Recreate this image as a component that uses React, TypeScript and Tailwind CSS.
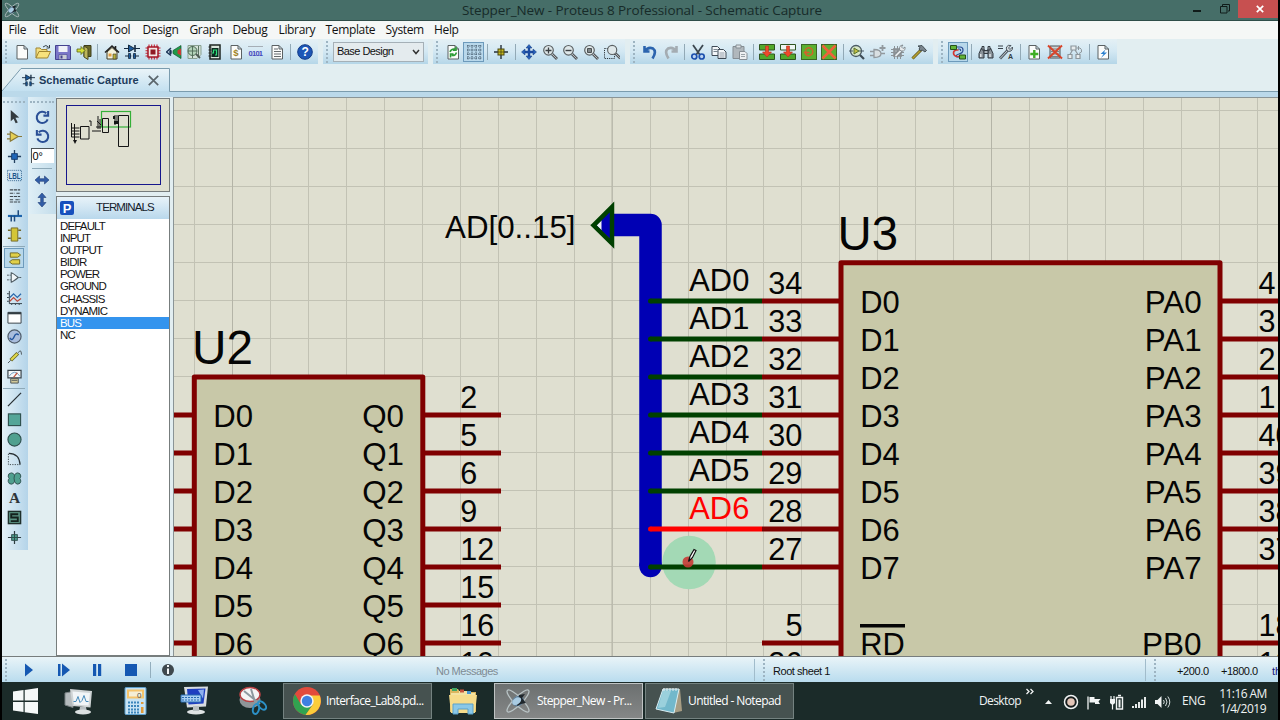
import type { ReactNode } from 'react';
import clsx from 'clsx';

type IconMap = Record<string, ReactNode>;

const page = <path d="M3 1.5h7l3.5 3.5v10H3z M10 1.5V5h3.5" fill="#fbfcfb" stroke="#5b6163" />;

const lens = (
  <>
    <path d="M10 10l5 5" stroke="#55595c" strokeWidth="2.8" />
    <path d="M10 10l4.6 4.6" stroke="#b5babd" strokeWidth="1" />
    <circle cx="6.5" cy="6.3" r="4.8" fill="#dfe8ea" stroke="#5b6062" strokeWidth="1.2" />
  </>
);

const blockArrow = <path d="M6.500 2h3v6h3L8 13 3.500 8h3z" fill="#ee4a2c" stroke="#b5301c" strokeWidth=".6" />;

const icons: IconMap = {
  new: page,
  open: (
    <>
      <path d="M1 14V4h4l1.500 1.500H12V8" fill="#f3df80" stroke="#a08530" />
      <path d="M1 14L4 7.500h11.500L12.500 14z" fill="#f8e27c" stroke="#a08530" />
      <path d="M8 3q3-3 5.500 0M14.500 1v3h-3" fill="none" stroke="#37424c" />
    </>
  ),
  save: (
    <>
      <path d="M.5 1.500h14l1 1v13H.5z" fill="#7a76c8" stroke="#45438f" />
      <path d="M3.500 2h9v6h-9z" fill="#f0f2f8" />
      <path d="M4 10.500h8v5H4z" fill="#c9cdd6" stroke="#45438f" strokeWidth=".6" />
      <path d="M5.500 11.500h2v3h-2z" fill="#45438f" />
    </>
  ),
  exit: (
    <>
      <path d="M8 1.500h7v11H8z" fill="#6b6a28" stroke="#3c3c1c" />
      <path d="M8 2l4 2.500v11L8 13z" fill="#bdb65a" stroke="#4a4a20" />
      <path d="M1 5h4V2.500L9 6.500 5 10.500V8H1z" fill="#d4e03a" stroke="#596418" strokeWidth=".8" />
    </>
  ),
  home: (
    <>
      <path d="M3 8v7h10V8L8 3.500z" fill="#f5f3dc" stroke="#403a22" />
      <path d="M1 8.500L8 2l7 6.500M11.500 2v3" fill="none" stroke="#222" strokeWidth="1.600" />
      <path d="M9 10h3v5H9z" fill="#b8b13a" stroke="#403a22" strokeWidth=".6" />
      <path d="M4.500 9.500h3v3h-3z" fill="#df9b42" />
    </>
  ),
  schematic: (
    <>
      <path d="M0 4.500h16M1 12h14" stroke="#14293f" strokeWidth="1.100" />
      <path d="M4.500 1v7l6-3.500z" fill="#1b5b9d" stroke="#14293f" />
      <path d="M11 1v7" stroke="#14293f" strokeWidth="1.600" />
      <path d="M4.500 9.500h2v5h-2zM9.500 9.500h2v5h-2z" fill="#1b5b9d" stroke="#14293f" strokeWidth=".8" />
      <path d="M7.200 12h1.800" stroke="#d6e9f3" strokeWidth="1.500" />
    </>
  ),
  chip: (
    <>
      <path d="M4 .5v15M6.700 .5v15M9.300 .5v15M12 .5v15M.5 4h15M.5 6.700h15M.5 9.300h15M.5 12h15" stroke="#c3202e" strokeWidth="1.100" />
      <rect x="3" y="3" width="10" height="10" fill="#f3e9e6" stroke="#a51426" strokeWidth="1.500" />
      <rect x="5.500" y="5.500" width="5" height="5" fill="#8f1a24" />
    </>
  ),
  view3d: (
    <>
      <path d="M15 1.500v13L7 9.500v-3z" fill="#1f9a4a" stroke="#12542b" strokeWidth=".7" />
      <path d="M11.500 6.500l3.500-2v7l-3.500-2z" fill="#c83c34" />
      <path d="M5 4L.5 8 5 11.500" fill="none" stroke="#1c3557" strokeWidth="1.500" />
      <ellipse cx="4.500" cy="8" rx="1.300" ry="2.500" fill="#1c3557" />
    </>
  ),
  gerber: (
    <>
      <path d="M2 1.500h13v9l-4 4H2z" fill="#d4e2d8" stroke="#8aa192" />
      <circle cx="6.500" cy="7" r="4.500" fill="#b4d4ba" stroke="#4c6853" />
      <path d="M2 7h9M6.500 2v12M12.500 2v10" stroke="#4c6853" strokeWidth=".9" />
      <path d="M10 10l4 4" stroke="#4c5a52" strokeWidth="1.800" />
    </>
  ),
  explorer: (
    <>
      <path d="M3 1h10v14H3z" fill="#d9e5dc" stroke="#1c2420" strokeWidth="1.500" />
      <path d="M4.500 4h7v9h-7z" fill="#0b2a20" />
      <path d="M5 9h1.500V6h3v5H8" stroke="#2fe07b" fill="none" strokeWidth="1.200" />
      <path d="M1.500 3h3M1.500 6h3M1.500 9h3M1.500 12h3" stroke="#222" />
    </>
  ),
  bill: (
    <>
      {page}
      <text x="5.200" y="12.300" fontSize="9.500" fontWeight="700" fill="#a08224" fontFamily="Liberation Sans, sans-serif">$</text>
    </>
  ),
  code: (
    <>
      <path d="M0 2.500h15" stroke="#a6aeb6" />
      <text x=".5" y="12" fontSize="7.500" fontWeight="700" fill="#4348bd" textLength="14.500" fontFamily="Liberation Sans, sans-serif">0101</text>
    </>
  ),
  notes: (
    <>
      {page}
      <path d="M5 5h4M5 7.500h7M5 10h7M5 12.500h7" stroke="#656b6e" />
    </>
  ),
  help: (
    <>
      <circle cx="8" cy="8" r="7.300" fill="#1d56b6" stroke="#123a86" />
      <text x="4.400" y="12.300" fontSize="12" fontWeight="700" fill="#fff" fontFamily="Liberation Sans, sans-serif">?</text>
    </>
  ),
  redraw: (
    <>
      {page}
      <path d="M5 8q1-3.500 5-3M11 2.800v3.400H8M11.500 8.500q-1 3.500-5 3M5.500 13.500V10h3" stroke="#2c9c36" strokeWidth="1.500" fill="none" />
    </>
  ),
  grid: (
    <path
      d="M1 2h15M1 6h15M1 10h15M1 14h15M2 1v15M6 1v15M10 1v15M14 1v15"
      stroke="#2f4456"
      strokeDasharray="1.200 1"
      strokeWidth=".9"
    />
  ),
  origin: (
    <>
      <path d="M8 1v14M1 8h14" stroke="#26303a" strokeWidth="1.400" />
      <rect x="5" y="5" width="6" height="6" fill="#cabd1f" stroke="#4a4612" />
      <path d="M8 5v6M5 8h6" stroke="#4a4612" strokeWidth=".8" />
    </>
  ),
  pan: (
    <>
      <path d="M8 2v12M2 8h12" stroke="#1c4ba0" strokeWidth="2.400" />
      <path d="M8 .5L11 4H5zM8 15.500L11 12H5zM.5 8L4 5v6zM15.500 8L12 5v6z" fill="#2760bb" stroke="#16397c" strokeWidth=".5" />
    </>
  ),
  zoomIn: (
    <>
      {lens}
      <path d="M6.500 3.500v6M3.500 6.500h6" stroke="#3a3f42" strokeWidth="1.300" />
    </>
  ),
  zoomOut: (
    <>
      {lens}
      <path d="M3.500 6.500h6" stroke="#3a3f42" strokeWidth="1.400" />
    </>
  ),
  zoomAll: (
    <>
      {lens}
      <path d="M4.500 4.500h4v4h-4z" fill="#80878a" stroke="#4a5052" />
    </>
  ),
  zoomArea: (
    <>
      <path d="M.5 4.500h10v10H.5z" fill="none" stroke="#30373b" strokeDasharray="1.200 1" />
      <g transform="translate(2 0) scale(.95)">{lens}</g>
    </>
  ),
  undo: <path d="M2.500 2v5.500h5M3 7q3-4.500 8-2.500 4 3-.5 10" fill="none" stroke="#2c64ae" strokeWidth="2.600" />,
  redo: <path d="M13.500 2v5.500h-5M13 7q-3-4.500-8-2.500-4 3 .5 10" fill="none" stroke="#a4acb2" strokeWidth="2.600" />,
  cut: (
    <>
      <path d="M3 1l7 10M13 1L6 11" stroke="#3e474f" strokeWidth="1.800" />
      <circle cx="4.300" cy="12.500" r="2.500" fill="#bcd4f2" stroke="#1d50ae" strokeWidth="1.700" />
      <circle cx="11.700" cy="12.500" r="2.500" fill="#bcd4f2" stroke="#1d50ae" strokeWidth="1.700" />
    </>
  ),
  copy: (
    <>
      <path d="M1 2.500h5.500L9 5v6.500H1z" fill="#f4f7fa" stroke="#3f4a56" />
      <path d="M2.500 5.500h4M2.500 7.500h4" stroke="#7b8792" />
      <path d="M7 5.500h5.500L15 8v6.500H7z" fill="#f4f7fa" stroke="#3f4a56" />
      <path d="M8.500 9h5M8.500 11h5M8.500 13h5" stroke="#7b8792" strokeWidth=".8" />
    </>
  ),
  paste: (
    <>
      <path d="M1 2.500h11v12H1z" fill="#b0b7bc" stroke="#858d93" />
      <path d="M4 1h5v3H4z" fill="#dce1e4" stroke="#858d93" />
      <path d="M7.500 7.500H13l2 2v6H7.500z" fill="#edf0f2" stroke="#858d93" />
      <path d="M9 10.500h4M9 12.500h4" stroke="#9ba3a8" />
    </>
  ),
  blockCopy: (
    <>
      <path d="M.5 .5h15V6H.5zM.5 10h15v5.500H.5z" fill="#52a82c" stroke="#2f5420" />
      {blockArrow}
    </>
  ),
  blockMove: (
    <>
      <path d="M.5 .5h15V6H.5z" fill="#eef5f3" stroke="#2f5420" />
      <path d="M.5 10h15v5.500H.5z" fill="#52a82c" stroke="#2f5420" />
      {blockArrow}
    </>
  ),
  blockRotate: (
    <>
      <rect x=".5" y=".5" width="15" height="15" fill="#5cb030" stroke="#3c6626" />
      <path d="M4.500 10a4 4 0 1 0-.3-4M3.500 8.500h5M5.500 6.500l-2 2 2 2" fill="none" stroke="#d2622b" strokeWidth="1.400" />
    </>
  ),
  blockDelete: (
    <>
      <rect x=".5" y=".5" width="15" height="15" fill="#5cb030" stroke="#3c6626" />
      <path d="M1.500 1.500l13 13M14.500 1.500l-13 13" stroke="#f0603a" strokeWidth="2.500" />
    </>
  ),
  pick: (
    <>
      <path d="M10.500 10.500L15 15" stroke="#3d4b55" strokeWidth="2.200" />
      <circle cx="7" cy="7" r="5.500" fill="#d9e8c8" stroke="#4b5a64" strokeWidth="1.300" />
      <path d="M5 4v6l5-3z" fill="#c2bd42" stroke="#56712e" />
      <path d="M0 7h4M10 7h5" stroke="#4b5a64" />
    </>
  ),
  makeDevice: (
    <>
      <path d="M4 5.500v8q7 0 7-4t-7-4zM0 7.500h4M0 11.500h4M11 9.500h4" fill="#d9dfe2" stroke="#92999e" strokeWidth="1.300" />
      <path d="M12.500 1v6M9.500 4h6" stroke="#92999e" strokeWidth="1.800" />
    </>
  ),
  packaging: (
    <>
      <path d="M3 4h9v9H3z" fill="#9da4a8" />
      <path d="M4.500 2v13M7.500 2v13M10.500 2v13M1 5.500h13M1 8.500h13M1 11.500h13" stroke="#8b9297" />
      <path d="M5.500 12L12 5.500" stroke="#767e83" strokeWidth="3.400" />
      <path d="M5.500 12L12 5.500" stroke="#e7ebed" strokeWidth="1.800" />
      <path d="M15 3l-2 1.500L11.500 3 13 1q-3 0-3.500 2.500t1.500 3.500q3 .5 4-1.500z" fill="#e7ebed" stroke="#767e83" strokeWidth=".8" />
    </>
  ),
  hammer: (
    <>
      <path d="M1.500 14.500L10 6" stroke="#5b511a" strokeWidth="3" />
      <path d="M1.500 14.500L10 6" stroke="#b5a032" strokeWidth="1.700" />
      <path d="M7 2l4-.5 4.500 5-1.500 1.500-3-2-1.500 1L8 5l1-1.500z" fill="#7b868e" stroke="#2f383e" strokeWidth=".8" />
    </>
  ),
  router: (
    <>
      <path d="M7 3h3q3 0 3 3t-4 4-2 3h2M8 5h1q2 0 1.500 2" fill="none" stroke="#2b4c94" strokeWidth="1.200" />
      <path d="M8.500 6H6.500q-3 .5-3 3t3 3.500H9" fill="none" stroke="#d23531" strokeWidth="1.600" />
      <path d="M.5 1.500h6v4h-6zM9.500 11h6v4h-6z" fill="#62b436" stroke="#28501a" />
    </>
  ),
  search: (
    <>
      <path d="M3.500 4L1 9.500V14h5V5H4zM12.500 4L15 9.500V14h-5V5h2z" fill="#8b949b" stroke="#333b42" />
      <path d="M4 2.500h2V6H4zM10 2.500h2V6h-2zM6 6.500h4v3H6z" fill="#aab3b9" stroke="#333b42" />
      <path d="M2.800 10v3M12 10v3" stroke="#eef2f4" strokeWidth="1.300" />
    </>
  ),
  property: (
    <>
      <path d="M0 2h5M0 4.500h5" stroke="#39424a" />
      <path d="M2 14.500L10 6" stroke="#4c565e" strokeWidth="2.800" />
      <path d="M2 14.500L10 6" stroke="#cbd3d8" />
      <path d="M14.500 3L12 5.500 10.500 4 13 1.500q-3-1-4.500 1.500-.5 2 .5 3.500 1.500 1.500 4 .5 2-1.500 1.500-4z" fill="#d5dce0" stroke="#4c565e" />
      <text x="10" y="14.800" fontSize="7" fontWeight="700" fill="#333b42" fontFamily="Liberation Sans, sans-serif">A</text>
    </>
  ),
  newSheet: (
    <>
      {page}
      <path d="M8.300 6v8M4.300 10h8" stroke="#3dae24" strokeWidth="2.400" />
    </>
  ),
  delSheet: (
    <>
      <path d="M3 2h10v12H3z" fill="#cdd3d5" stroke="#4b5357" />
      <path d="M4 5h8M4 7.500h8M4 10h8M4 12.500h8" stroke="#7b8387" />
      <path d="M1 1.500l14 13M15 1.500l-14 13" stroke="#d8442a" strokeWidth="2" />
    </>
  ),
  parent: (
    <>
      <path d="M4 2h5v4H4zM1 10.500h4v4H1zM9 10.500h4v4H9zM3 10.500L5.500 6M11 10.500L8 6" fill="#e7ecee" stroke="#8d969b" strokeWidth="1.200" />
      <path d="M9.500 4H13M11.500 2v4M13 4q2 1 1.500 4L12 9.500" fill="none" stroke="#8d969b" />
    </>
  ),
  electrical: (
    <>
      {page}
      <path d="M10.500 5.500L5.500 10h3L6 14l6-5.500H9z" fill="#2b80cf" />
    </>
  ),

  // mode selector
  arrow: <path d="M4 1l9 8-4 .3 2.500 5-2.300 1L7 10.500 4 13z" fill="#343b40" />,
  component: <path d="M3.500 3v10l8.500-5zM0 5.500h3.500M0 10.500h3.500M12 8h4" fill="#e5cf55" stroke="#897936" strokeWidth="1.200" />,
  junction: (
    <>
      <path d="M8 1v14M1 8h14" stroke="#24415f" strokeWidth="1.400" />
      <rect x="5" y="5" width="6" height="6" fill="#1f66b8" stroke="#153b6d" />
    </>
  ),
  label: (
    <>
      <path d="M.5 2.500h15v11H.5z" fill="none" stroke="#3f6d95" strokeDasharray="1.200 1" />
      <text x="1.500" y="11.500" fontSize="9.500" fontWeight="700" textLength="13" lengthAdjust="spacingAndGlyphs" fill="#1d5488" fontFamily="Liberation Sans, sans-serif">LBL</text>
    </>
  ),
  script: <path d="M3 2h11M3 5.500h5M10 5.500h4M3 9h11M3 12.500h4M9 12.500h5M3 15h11" stroke="#3f474d" strokeDasharray="3.500 .8" strokeWidth="1.100" />,
  bus: (
    <>
      <path d="M1 8.500h15" stroke="#1e65ad" strokeWidth="2.300" />
      <path d="M4.500 8v6.500M8 8v6.500M12 2.500V8" stroke="#1e4a7c" strokeWidth="1.600" />
    </>
  ),
  subcircuit: (
    <>
      <path d="M1 3.500h3M1 12h3M12 3.500h3M12 12h3" stroke="#716629" strokeWidth="1.600" />
      <path d="M4.500 1h7v14h-7z" fill="#d4c536" stroke="#716629" />
    </>
  ),
  terminal: <path d="M3.500 2h8l3 2.300-3 2.300h-8zM13.500 9.300h-8l-3 2.300 3 2.300h8z" fill="#e0d04a" stroke="#6f6622" />,
  pin: (
    <>
      <path d="M4.500 3v10q2-.5 7.500-5-5.500-4.500-7.500-5z" fill="#f1f6f8" stroke="#4c5960" strokeWidth="1.100" />
      <path d="M0 5.500h4M0 10.500h4M13 8h3" stroke="#4c5960" strokeDasharray="2 .8" />
    </>
  ),
  graph: (
    <>
      <path d="M2.500 1v13.500H16M0 4h2M0 8h2M0 12h2M5 15v1M9 15v1M13 15v1" fill="none" stroke="#2c3941" />
      <path d="M3 8l4-4 4 4 4-4" fill="none" stroke="#2969ac" strokeWidth="1.300" />
      <path d="M3 12l4-4 4 4 4-3" fill="none" stroke="#bc4839" strokeWidth="1.300" />
    </>
  ),
  tape: (
    <>
      <path d="M1 2.500h14v11.500H1z" fill="#fff" stroke="#333d43" />
      <path d="M1 3.500h14" stroke="#333d43" strokeWidth="2.200" />
    </>
  ),
  generator: (
    <>
      <circle cx="8" cy="8" r="7" fill="#a9bddd" stroke="#4f5c6a" strokeWidth="1.300" />
      <path d="M3 9.500q2.500 4 4.500-1t5-2" fill="none" stroke="#24559e" strokeWidth="1.500" />
    </>
  ),
  probe: (
    <>
      <path d="M1 15l3-3M12 4q3-5 3.500 2" stroke="#4c5358" fill="none" />
      <path d="M4 12l7.500-7.500" stroke="#686524" strokeWidth="4" />
      <path d="M4.500 11.500l6.500-6.500" stroke="#e1d94c" strokeWidth="2.300" />
    </>
  ),
  instrument: (
    <>
      <path d="M1 1.500h14v8H1z" fill="#f6f8f8" stroke="#3d474e" strokeWidth="1.300" />
      <path d="M2 8q6-9 12 0" fill="none" stroke="#6c99be" />
      <path d="M7 9l4-5" stroke="#c2553f" strokeWidth="1.300" />
      <path d="M4 10h8v5H4z" fill="#d3ca9a" stroke="#4a5154" />
      <path d="M5 12h6" stroke="#4a5154" />
    </>
  ),
  line: <path d="M1 15L15 1" stroke="#262e33" strokeWidth="1.300" />,
  rect: <rect x="1.500" y="2" width="13" height="12.500" fill="#54a598" stroke="#2e4f4d" strokeWidth="1.200" />,
  circle: <circle cx="8" cy="8" r="7" fill="#4fa08f" stroke="#2e4f4d" strokeWidth="1.200" />,
  arc: (
    <>
      <path d="M2 2.500q11 0 12 12" fill="none" stroke="#262e33" strokeWidth="1.300" />
      <path d="M1.500 3v11.500H14" fill="none" stroke="#3c4549" strokeDasharray="1.300 1.300" />
    </>
  ),
  blob: (
    <path
      d="M8 4.500Q7 2 4.500 2 1 2.500 1.300 5.500q.2 1.500 1 2.500-1.300 1-1 3.200.6 3 3.400 2.800Q7.300 14 8 11q1 3 3.500 3 3-.3 3.200-3 0-2-1-3 1-1 1-2.700-.2-3-3.200-3.300-2.500 0-3.500 2.500zM8 4.500q-1 3 0 6.500"
      fill="#4fa08f"
      stroke="#2e4f4d"
    />
  ),
  text: <text x="2" y="13.500" fontSize="16.500" fontWeight="700" fill="#2f363a" fontFamily="Liberation Serif, serif">A</text>,
  symbol: (
    <>
      <rect x="1.500" y="1.500" width="13" height="13" fill="#5b9283" stroke="#1f2f2b" strokeWidth="1.500" />
      <path d="M12 4.500H4.500V8h7v3.800H4" fill="none" stroke="#14211d" strokeWidth="2" />
    </>
  ),
  marker: (
    <>
      <path d="M8 1v14M1 8h14" stroke="#2d3c40" strokeWidth="1.300" />
      <rect x="5" y="5" width="6" height="6" fill="#4fa08f" stroke="#2d4a4a" />
      <path d="M8 5v6M5 8h6" stroke="#2d4a4a" />
    </>
  ),
  rotateCw: <path d="M12 3.500A6 6 0 1 0 13.500 10M14 1v5H9" fill="none" stroke="#2a4f96" strokeWidth="2.200" />,
  rotateCcw: <path d="M4 3.500A6 6 0 1 1 2.500 10M2 1v5h5" fill="none" stroke="#2a4f96" strokeWidth="2.200" />,
  flipH: <path d="M1 8l4.500-4v2.700h5V4L15 8l-4.500 4V9.300h-5V12z" fill="#315da7" stroke="#1e3c75" strokeWidth=".6" />,
  flipV: <path d="M8 1l4 4.500H9.300v5H12L8 15l-4-4.500h2.700v-5H4z" fill="#315da7" stroke="#1e3c75" strokeWidth=".6" />,
};

function Icon({ name, size = 16 }: { name: string; size?: number }) {
  return (
    <svg width={size} height={size} viewBox="0 0 16 16" fill="none" className="shrink-0">
      {icons[name]}
    </svg>
  );
}

function Grip() {
  return <div className="h-[22px] w-0 shrink-0 border-l-2 border-dotted border-[#9db4c2]" />;
}

// "|" marks a separator, a leading "*" marks a pressed button
function ToolGroup({ items, className }: { items: string[]; className: string }) {
  return (
    <div className={clsx('flex h-[25px] shrink-0 items-center bg-gradient-to-b from-[#e4f0f5] via-[#d3e8f3] to-[#b5d6e8] pl-[3px]', className)}>
      <Grip />
      <div className="ml-[4.500px] flex items-center">
        {items.map((item, i) => {
          if (item === '|') return <div key={i} className="mx-[3px] h-4 w-px bg-[#92a9b6]" />;
          const pressed = item.startsWith('*');
          return (
            <div
              key={i}
              className={clsx(
                'flex h-5 w-[20.7px] shrink-0 items-center justify-center',
                pressed && 'border border-[#6d9abb] bg-[#b8d8eb]',
              )}
            >
              <Icon name={pressed ? item.slice(1) : item} />
            </div>
          );
        })}
      </div>
    </div>
  );
}

const menus = [
  { label: 'File', w: 'w-[30px]' },
  { label: 'Edit', w: 'w-[32px]' },
  { label: 'View', w: 'w-[37px]' },
  { label: 'Tool', w: 'w-[35px]' },
  { label: 'Design', w: 'w-[47px]' },
  { label: 'Graph', w: 'w-[43px]' },
  { label: 'Debug', w: 'w-[46px]' },
  { label: 'Library', w: 'w-[47px]' },
  { label: 'Template', w: 'w-[60px]' },
  { label: 'System', w: 'w-[48.500px]' },
  { label: 'Help', w: 'w-[40px]' },
];

function TitleBar() {
  return (
    <div className="relative flex h-[21px] shrink-0 items-center justify-center border-b border-[#2f4d49] bg-[#466e68] pl-[4px]">
      <svg width="16" height="16" viewBox="0 0 26 26" className="absolute left-[2px] top-[2px]">
        <ProteusMark />
      </svg>
      <span className="text-[13.500px] tracking-[-0.100px] text-[#172b29]">
        Stepper_New - Proteus 8 Professional - Schematic Capture
      </span>
      <div className="absolute right-0 top-0 flex h-[18px] items-center">
        <div className="mr-[19px] mt-[4px] h-[2px] w-2 bg-[#101c1a]" />
        <svg width="10" height="10" viewBox="0 0 10 10" fill="none" stroke="#101c1a" className="mr-[8px]">
          <path d="M.5 2.500h6.500v6.500H.5zM2.500 2V.5h7V7H8" />
        </svg>
        <div className="flex h-full w-[40px] items-center justify-center bg-[#c75050] pl-[4px]">
          <svg width="8" height="8" viewBox="0 0 8 8" stroke="#fff" strokeWidth="1.700">
            <path d="M.8 .8l6.400 6.400M7.200 .8L.8 7.200" />
          </svg>
        </div>
      </div>
    </div>
  );
}

function ProteusMark() {
  return (
    <>
      <ellipse cx="13" cy="13" rx="15" ry="4" transform="rotate(45 13 13)" fill="none" stroke="#b9c4c6" strokeWidth="1.300" />
      <ellipse cx="13" cy="13" rx="15" ry="4" transform="rotate(-45 13 13)" fill="none" stroke="#b9c4c6" strokeWidth="1.300" />
      <ellipse cx="13" cy="13" rx="6" ry="5" transform="rotate(-35 13 13)" fill="#5d7e9a" />
      <path d="M14 7l6-1-3 4 4 5-5 1-4 2z" fill="#1e262b" />
      <ellipse cx="11.500" cy="13.500" rx="5" ry="3.200" transform="rotate(-35 11 13)" fill="#a9cbe2" />
    </>
  );
}

function Toolbars() {
  return (
    <div className="flex h-[26px] shrink-0 items-start">
      <ToolGroup
        className="w-[316px]"
        items={['new', 'open', 'save', 'exit', '|', 'home', 'schematic', 'chip', 'view3d', 'gerber', 'explorer', 'bill', 'code', 'notes', '|', 'help']}
      />
      <div className="ml-[5px] flex h-[25px] w-[105px] shrink-0 items-center bg-gradient-to-b from-[#e4f0f5] via-[#d3e8f3] to-[#b5d6e8] pl-[3px]">
        <Grip />
        <div className="ml-[5px] flex h-[20px] w-[91px] items-center justify-between border border-[#a5b0b7] bg-[#e4ebee] px-[3px] font-['Liberation_Sans',sans-serif] text-[11px] tracking-[-0.550px] text-[#111]">
          Base Design
          <svg width="8" height="6" viewBox="0 0 8 6" fill="none" stroke="#333" strokeWidth="1.500">
            <path d="M1 1l3 3.500L7 1" />
          </svg>
        </div>
      </div>
      <ToolGroup
        className="ml-[5px] w-[192px]"
        items={['redraw', '*grid', '|', 'origin', '|', 'pan', 'zoomIn', 'zoomOut', 'zoomAll', 'zoomArea']}
      />
      <ToolGroup
        className="ml-[5px] w-[303px]"
        items={['undo', 'redo', '|', 'cut', 'copy', 'paste', '|', 'blockCopy', 'blockMove', 'blockRotate', 'blockDelete', '|', 'pick', 'makeDevice', 'packaging', 'hammer']}
      />
      <ToolGroup
        className="ml-[5px] w-[179px]"
        items={['*router', '|', 'search', 'property', '|', 'newSheet', 'delSheet', 'parent', '|', 'electrical']}
      />
    </div>
  );
}

function TabStrip() {
  return (
    <div className="relative h-[32px] shrink-0">
      <svg width="1276" height="32" viewBox="0 0 1276 32" className="absolute inset-0">
        <defs>
          <linearGradient id="tab" x1="0" y1="0" x2="0" y2="1">
            <stop offset="0" stopColor="#eaf4f8" />
            <stop offset="1" stopColor="#c3e0f0" />
          </linearGradient>
        </defs>
        <path d="M0 26h1276v6H0z" fill="#bbd9ea" />
        <path d="M0 26L19 3.500h148.500V26z" fill="url(#tab)" />
        <path d="M0 26L19 3.500h148.500V26.500H1276" fill="none" stroke="#7b9cae" />
      </svg>
      <div className="relative flex h-[30px] items-center pl-[20px]">
        <Icon name="schematic" size={13} />
        <span className="ml-[4px] font-['Liberation_Sans',sans-serif] text-[11px] font-bold text-[#1d3c5c]">Schematic Capture</span>
        <svg width="11" height="11" viewBox="0 0 11 11" stroke="#5b666c" strokeWidth="1.700" className="ml-[9px]">
          <path d="M.8 .8l9.400 9.400M10.200 .8L.8 10.200" />
        </svg>
      </div>
    </div>
  );
}

function ModeBar() {
  const groups = [
    ['arrow', 'component', 'junction', 'label', 'script', 'bus', 'subcircuit'],
    ['*terminal', 'pin', 'graph', 'tape', 'generator', 'probe', 'instrument'],
    ['line', 'rect', 'circle', 'arc', 'blob', 'text', 'symbol', 'marker'],
  ];
  return (
    <div className="flex h-[453px] w-[26px] shrink-0 flex-col items-center bg-gradient-to-r from-[#e4f1f7] to-[#b4d4e9] pr-[2px] pt-[4px]">
      <div className="mb-[4px] w-[22px] border-t-2 border-dotted border-[#9db4c2]" />
      {groups.map((group, g) => (
        <div key={g} className={clsx('flex w-[22px] flex-col items-center', g > 0 && 'mt-[2px] border-t border-[#8ea9b8] pt-[1px]')}>
          {group.map((item) => {
            const pressed = item.startsWith('*');
            return (
              <div
                key={item}
                className={clsx('flex h-[19.650px] w-5 items-center justify-center', pressed && 'border border-[#6d9abb] bg-[#b8d8eb]')}
              >
                <Icon name={pressed ? item.slice(1) : item} size={15} />
              </div>
            );
          })}
        </div>
      ))}
    </div>
  );
}

function OrientationBar() {
  return (
    <div className="flex h-[117px] w-[28px] shrink-0 flex-col items-center bg-gradient-to-r from-[#e0eff6] to-[#c3ddeb] pt-[4px]">
      <div className="mb-[5px] w-[24px] border-t-2 border-dotted border-[#9db4c2]" />
      <div className="flex h-[19px] items-center"><Icon name="rotateCw" size={15} /></div>
      <div className="flex h-[19.500px] items-center"><Icon name="rotateCcw" size={15} /></div>
      <div className="mt-px h-[15px] w-[23px] border-l border-t border-[#4c5357] bg-white pl-px font-['Liberation_Sans',sans-serif] text-[11px] leading-[14px] text-black">
        0°
      </div>
      <div className="mb-px mt-[5px] h-px w-[20px] bg-[#8ea9b8]" />
      <div className="flex h-[20px] items-center"><Icon name="flipH" size={16} /></div>
      <div className="flex h-[20px] items-center"><Icon name="flipV" size={16} /></div>
    </div>
  );
}

const terminals = ['DEFAULT', 'INPUT', 'OUTPUT', 'BIDIR', 'POWER', 'GROUND', 'CHASSIS', 'DYNAMIC', 'BUS', 'NC'];

function SidePanel() {
  return (
    <div className="flex w-[114px] shrink-0 flex-col font-['Liberation_Sans',sans-serif]">
      <div className="h-[94px] border border-[#777d7d] bg-[#dfdfd0] p-[6px_9px]">
        <svg width="96" height="81" viewBox="66 105 96 81" fill="none">
          <rect x="66.500" y="105.500" width="94" height="79" stroke="#16168c" />
          <rect x="101.500" y="111.500" width="29" height="15.500" stroke="#35b038" strokeWidth="1.200" />
          <g stroke="#151515">
            <path d="M118.500 115.500h10v31h-10z" />
            <path d="M102.500 118.500h6v14h-6zM80.500 126.500h8.500v12.500h-8.500z" />
            <path d="M71.500 123v14M74.500 124v18M71.500 128h8M71.500 131h8M71.500 134h8M71.500 137h8M89 121h2v5M92 131h9M98 116v13M100 119v10M96 127h5M97 121l4 4M115 115v10M117 115v7" />
          </g>
          <path d="M73 140h4l-2 4zM113 116h2v3h-2zM114 121h4v3h-4z" fill="#151515" />
        </svg>
      </div>
      <div className="mt-[4px] flex min-h-0 flex-1 flex-col border border-[#777d7d] bg-white">
        <div className="mb-[.5px] flex h-[22px] shrink-0 items-center bg-gradient-to-b from-[#e8f3f9] to-[#b9d8ec]">
          <div className="ml-[3px] flex h-[14px] w-[14px] items-center justify-center rounded-[2px] bg-[#1750bd] text-[13px] font-bold leading-none text-white">P</div>
          <span className="ml-[22px] text-[11.500px] tracking-[-0.880px] text-[#14202a]">TERMINALS</span>
        </div>
        {terminals.map((name) => (
          <div
            key={name}
            className={clsx(
              'h-[12.200px] shrink-0 pl-[3px] text-[11.500px] leading-[12.200px] tracking-[-0.850px]',
              name === 'BUS' ? 'bg-[#3494ee] text-white' : 'text-[#151515]',
            )}
          >
            {name}
          </div>
        ))}
      </div>
    </div>
  );
}

function Label({ x, y, w, size = 30.5, fill = '#050505', children }: { x: number; y: number; w: number; size?: number; fill?: string; children: string }) {
  return (
    <text x={x} y={y} fontSize={size} textLength={w} lengthAdjust="spacingAndGlyphs" fill={fill}>
      {children}
    </text>
  );
}

const PITCH = 38;
const range = (n: number) => Array.from({ length: n }, (_, i) => i);

function Schematic() {
  const pinY = (i: number) => 300.9 + i * PITCH;
  const u3Pins = ['34', '33', '32', '31', '30', '29', '28', '27'];
  const paPins = ['4', '3', '2', '1', '40', '39', '38', '37'];
  const u2Pins = ['2', '5', '6', '9', '12', '15', '16', '19'];

  return (
    <svg width="1104" height="558" viewBox="174 98 1104 558" fill="none" className="block font-['Liberation_Sans',sans-serif]">
      <rect x="174" y="98" width="1104" height="558" fill="#dfdfd0" />
      <g stroke="#c2c2b4">
        {range(29).map((i) => (
          <path key={i} d={`M${Math.round(194.2 + i * 37.95) + 0.5} 98v558`} />
        ))}
        {range(15).map((i) => (
          <path key={i} d={`M174 ${Math.round(110.4 + i * PITCH) + 0.5}h1104`} />
        ))}
      </g>
      <path d="M232.500 98v558M612 98v558M991.500 98v558" stroke="#b4b4a7" />

      {/* U2 latch */}
      <path d="M194.300 680V377h228.500v303" fill="#c8c8a8" />
      <g stroke="#800000" strokeWidth="5">
        <path d="M194.300 680V377h228.500v303" strokeLinejoin="round" />
        {range(7).map((i) => (
          <path key={i} d={`M174 ${pinY(i + 3)}h20M422 ${pinY(i + 3)}h79`} />
        ))}
      </g>
      <Label x={192} y={364.3} w={61} size={48}>U2</Label>
      {range(7).map((i) => (
        <g key={i}>
          <Label x={213.3} y={426.5 + i * PITCH} w={39.8}>{`D${i}`}</Label>
          <Label x={362.2} y={426.5 + i * PITCH} w={41.8}>{`Q${i}`}</Label>
        </g>
      ))}
      {u2Pins.map((pin, i) => (
        <Label key={pin} x={460.3} y={407.7 + i * PITCH} w={pin.length * 17}>{pin}</Label>
      ))}

      {/* U3 peripheral interface */}
      <path d="M841 680V262.700h379V680" fill="#c8c8a8" />
      <g stroke="#800000" strokeWidth="5">
        <path d="M841 680V262.700h379V680" strokeLinejoin="round" />
        {range(8).map((i) => (
          <path key={i} d={`M762 ${pinY(i)}h79M1220 ${pinY(i)}h60`} />
        ))}
        <path d={`M762 ${pinY(9)}h79M1220 ${pinY(9)}h60`} />
      </g>
      <Label x={837.5} y={250} w={60.5} size={48}>U3</Label>
      {u3Pins.map((pin, i) => (
        <g key={pin}>
          <Label x={768.3} y={293.800 + i * PITCH} w={34}>{pin}</Label>
          <Label x={860.300} y={312.900 + i * PITCH} w={39.5}>{`D${i}`}</Label>
          <Label x={1144.700} y={312.900 + i * PITCH} w={57}>{`PA${i}`}</Label>
          <Label x={1258.5} y={293.800 + i * PITCH} w={paPins[i].length * 17}>{paPins[i]}</Label>
        </g>
      ))}
      <Label x={785.5} y={636} w={17}>5</Label>
      <Label x={768.3} y={674} w={34}>36</Label>
      <Label x={860.300} y={654.700} w={44.5}>RD</Label>
      <path d="M860 625.700h45" stroke="#050505" strokeWidth="3.500" />
      <Label x={1142} y={654.700} w={59.5}>PB0</Label>
      <Label x={1258.5} y={636} w={34}>18</Label>
      <Label x={1258.5} y={674} w={34}>19</Label>

      {/* cursor highlight sits below the wires */}
      <circle cx="689" cy="562.500" r="26.800" fill="#a3d9b5" />

      {/* address/data bus */}
      <path d="M612 225H650.500V566" stroke="#0000b4" strokeWidth="22.500" strokeLinejoin="round" />
      <circle cx="650.500" cy="566" r="11.250" fill="#0000b4" />
      <path d="M595 225L612 209V241z" fill="#0000b4" />
      <path d="M596.500 225.300l5-5v10z" fill="#eef0f5" />
      <path d="M593.500 225.300L612 207V243.500z" stroke="#004000" strokeWidth="4.500" />
      <Label x={445} y={237.500} w={130.5}>AD[0..15]</Label>

      {range(8).map((i) => (
        <g key={i}>
          <path d={`M650.500 ${pinY(i)}H762`} stroke={i === 6 ? '#ff0000' : '#004000'} strokeWidth="5" />
          <circle cx="650.500" cy={pinY(i)} r="2.500" fill={i === 6 ? '#ff0000' : '#004000'} />
        </g>
      ))}
      {range(7).map((i) => (
        <Label key={i} x={689.300} y={291.300 + i * PITCH} w={60} fill={i === 6 ? '#ff0000' : '#050505'}>{`AD${i}`}</Label>
      ))}

      <circle cx="688" cy="562" r="5.500" fill="#c93b36" opacity=".9" />
      <path d="M688.500 561.500l1.500-5 4-7 2 1-3.500 7z" fill="#fff" stroke="#111" strokeWidth="1.200" />
    </svg>
  );
}

function StatusBar() {
  return (
    <div className="flex h-[25px] shrink-0 items-center bg-gradient-to-b from-[#e9f4f8] to-[#b9dcee] pl-[3px] font-['Liberation_Sans',sans-serif] text-[11px]">
      <Grip />
      <svg width="160" height="20" viewBox="0 0 160 20" fill="#1558b2" className="ml-[13px] shrink-0">
        <path d="M5 3.500L13 10 5 16.500zM38 4h2.500v12H38zM42 3.500L50 10l-8 6.500zM73 4h3.200v12H73zM78 4h3.200v12H78zM105 4h12v12h-12z" />
        <path d="M130.500 2v16" stroke="#93aebd" />
        <circle cx="148" cy="10" r="6" fill="#3f484d" />
        <path d="M148 8.500v5.500M148 5v2" stroke="#f4f6f7" strokeWidth="2" />
      </svg>
      <span className="ml-[256px] w-[318px] shrink-0 pt-[3px] tracking-[-0.500px] text-[#7f8b93]">No Messages</span>
      <div className="h-[22px] w-px shrink-0 bg-[#a1bccb]" />
      <div className="w-[8px] shrink-0" />
      <Grip />
      <span className="ml-[8px] w-[372px] shrink-0 pt-[3px] tracking-[-0.450px] text-[#111]">Root sheet 1</span>
      <div className="h-[22px] w-px shrink-0 bg-[#a1bccb]" />
      <div className="w-[8px] shrink-0" />
      <Grip />
      <span className="ml-[21px] w-[44px] shrink-0 pt-[3px] tracking-[-0.350px] text-[#111]">+200.0</span>
      <span className="w-[51px] shrink-0 pt-[3px] tracking-[-0.500px] text-[#111]">+1800.0</span>
      <span className="pt-[3px] text-[#15157c]">th</span>
    </div>
  );
}

function TaskButton({ icon, label, active }: { icon: ReactNode; label: string; active?: boolean }) {
  return (
    <div
      className={clsx(
        'flex h-[36px] w-[149px] shrink-0 items-center whitespace-nowrap border pl-[8px] text-[12px] tracking-[-0.600px] text-white',
        active ? 'border-[#bfc3c3] bg-gradient-to-b from-[#6c7070] to-[#858787]' : 'border-[#748280] bg-[#465250]',
      )}
    >
      <svg width="30" height="30" viewBox="0 0 30 30" fill="none" className="mr-[4px] shrink-0">{icon}</svg>
      {label}
    </div>
  );
}

const chrome = (
  <>
    <circle cx="15" cy="15" r="14" fill="#e24b3c" />
    <path d="M2.900 8A14 14 0 0 0 13.500 29L21 18.500 15 15 9 18.500z" fill="#31a350" />
    <path d="M27.700 9.500A14 14 0 0 1 13.500 29L21.300 18 15 9.500z" fill="#fbcd3a" />
    <circle cx="15" cy="15" r="6.700" fill="#f3f5f5" />
    <circle cx="15" cy="15" r="5.200" fill="#3f7fe0" />
  </>
);

const notepad = (
  <>
    <path d="M8 3h18l2 22-9 2z" fill="#a79d84" />
    <path d="M9 3h16l-5 24L2 23z" fill="#72b8cb" stroke="#d9eef3" />
    <path d="M9 4l8 1-6 16-7 1z" fill="#b5e0e8" opacity=".6" />
    <path d="M10 2v3M13 2v3M16 2v3M19 2v3M22 2v3" stroke="#e8edee" />
  </>
);

function Taskbar() {
  return (
    <div className="flex h-[38px] shrink-0 items-center bg-[#1b2b29]">
      <svg width="281" height="38" viewBox="2 682 281 38" fill="none" className="shrink-0">
        <path d="M13 691.500l10.500-1.500v10.500H13zM24.700 690l13.300-2v12.500H24.700zM13 702h10.500v10L13 710.500zM24.700 702H38v12l-13.300-1.800z" fill="#f5f8f8" />

        <path d="M65 693l8-1.500v16l-8-2.500z" fill="#b5bbbd" stroke="#7b8385" />
        <path d="M70 689l22 2-1.500 16.500-18-1.500z" fill="#cfd4d5" />
        <path d="M72.500 691.500l17.500 1.500-1.500 12.500-14.500-1z" fill="#f1f5f7" />
        <path d="M73.500 701.500h2.500l2-5 2 6 2-2 2-5 2 6h2.500" stroke="#4489b9" />
        <path d="M80 707h6l1 5h-8z" fill="#b8bfc2" />
        <ellipse cx="83" cy="712" rx="8" ry="2.500" fill="#dbe0e1" />

        <rect x="125" y="687.500" width="21" height="27" rx="1" fill="#c7e3f4" stroke="#5d9fca" />
        <path d="M127 689.500h17v9h-17z" fill="#f5c46b" />
        <path d="M129 691.500h13v5h-13z" fill="#f4eed6" />
        <text x="137" y="697.500" fontSize="8" fill="#4c4c4c" fontFamily="Liberation Sans, sans-serif">0</text>
        <path d="M128 702.500h11M128 706h11M128 709.500h11M128 712.500h11" stroke="#3c86bb" strokeWidth="2" strokeDasharray="2 1" />
        <path d="M141 702h2.500v2H141zM141 707h2.500v6H141z" fill="#df9a39" />

        <path d="M184 687l24-.5-2 20-19 1z" fill="#d7dcdf" />
        <path d="M187 689l18.500-.5-2 15-15 1z" fill="#1f3fc0" />
        <path d="M198 690l6-.5-1 9z" fill="#8fb1ee" />
        <path d="M181 695h20v7h-20z" fill="#a9cff2" stroke="#286cb1" />
        <path d="M182 697.500h18M182 700h18" stroke="#286cb1" strokeDasharray="2 1" />
        <ellipse cx="196" cy="712" rx="9" ry="2.500" fill="#dfe3e4" />
        <path d="M193 706h6v5h-6z" fill="#b8bfc2" />

        <ellipse cx="250" cy="700" rx="10.500" ry="8" fill="#8e9598" />
        <ellipse cx="250" cy="694.500" rx="10" ry="7" fill="#f4f5f5" stroke="#b84143" strokeWidth="1.500" />
        <path d="M244 691l16 13M251 689l5 16" stroke="#8d999f" strokeWidth="2" />
        <ellipse cx="256" cy="709" rx="3" ry="5" stroke="#2c91c7" strokeWidth="2" transform="rotate(15 256 709)" />
        <ellipse cx="262" cy="705.500" rx="3" ry="5" stroke="#2c91c7" strokeWidth="2" transform="rotate(-45 262 705.500)" />
      </svg>
      <TaskButton icon={chrome} label="Interface_Lab8.pd..." />
      <div className="flex w-[62px] shrink-0 justify-center">
        <svg width="32" height="30" viewBox="0 0 32 30" fill="none">
          <path d="M3 3h8l2 3h16v20H3z" fill="#dcb75f" />
          <path d="M5 2h5v3H5z" fill="#3fa563" />
          <path d="M12 5h8l1 2h7v4H4V7h8z" fill="#f3e3a2" />
          <path d="M13 3.500h4v3h-4z" fill="#c9543c" />
          <path d="M20 5h4v3h-4z" fill="#4795cf" />
          <path d="M2 9h28l-2 18H4z" fill="#f6dc8b" />
          <path d="M6 28V18h20v10h-5v-5H11v5z" fill="#8ac8e8" stroke="#5aa1ca" />
        </svg>
      </div>
      <TaskButton active icon={<g transform="translate(2 2)"><ProteusMark /></g>} label="Stepper_New - Pr..." />
      <div className="w-[2px] shrink-0" />
      <TaskButton icon={notepad} label="Untitled - Notepad" />
      <div className="flex flex-1 items-center text-[12px] tracking-[-0.600px] text-[#eff3f3]">
        <span className="ml-[185px] w-[45px] shrink-0">Desktop</span>
        <svg width="154" height="38" viewBox="1024 682 154 38" fill="none" className="shrink-0">
          <path d="M1026.500 689l2.500 2.500-2.500 2.500M1030.500 689l2.500 2.500-2.500 2.500" stroke="#f1f4f4" strokeWidth="1.300" />
          <path d="M1045 704h7l-3.500-4z" fill="#f1f4f4" />
          <circle cx="1071" cy="702" r="6.500" fill="#171d1d" stroke="#f1f4f4" strokeWidth="1.500" />
          <circle cx="1071" cy="702" r="3.800" fill="#e3c5b7" />
          <path d="M1088 696.500v13" stroke="#f1f4f4" strokeWidth="1.300" />
          <path d="M1089.500 697h5v2h6l-2 2.500 1.500 2.500h-5v-1.500h-5.500z" fill="#f1f4f4" />
          <path d="M1116.500 697.500h6v11.500h-6zM1118 695.500h3" stroke="#f1f4f4" strokeWidth="1.400" />
          <path d="M1118.500 699.500h2v8h-2zM1110 699h5v4q-2.500 3-5 0z" fill="#f1f4f4" />
          <path d="M1111 696v3M1114 696v3M1112.500 704v5.500" stroke="#f1f4f4" strokeWidth="1.200" />
          <path d="M1133 706v2M1136 704v4M1139 702v6M1142 699.500v8.500M1145 697v11" stroke="#f1f4f4" strokeWidth="1.900" />
          <path d="M1155 700h2.500l4-4v12l-4-4H1155z" fill="#f1f4f4" />
          <path d="M1163.500 700q1.500 2 0 4M1165.500 698q3 4 0 8M1167.800 696.500q4 5.500 0 11" stroke="#d6dddd" />
        </svg>
        <span className="ml-[4px] w-[37px] shrink-0 tracking-[-0.400px]">ENG</span>
        <div className="flex w-[48px] flex-col items-center whitespace-nowrap leading-[15.500px]">
          <span>11:16 AM</span>
          <span className="tracking-[-0.450px]">1/4/2019</span>
        </div>
      </div>
    </div>
  );
}

export default function App() {
  return (
    <div className="h-[720px] w-[1280px] overflow-hidden bg-black px-[2px] font-['Open_Sans','Noto_Sans',sans-serif]">
      <div className="flex h-full flex-col overflow-hidden bg-[#e2eef1]">
        <TitleBar />
        <div className="flex h-[18px] shrink-0 items-center bg-[#f5f7f6] pl-[6.500px] text-[12px] tracking-[-0.350px] text-[#111]">
          {menus.map((menu) => (
            <span key={menu.label} className={clsx('shrink-0', menu.w)}>{menu.label}</span>
          ))}
        </div>
        <Toolbars />
        <TabStrip />
        <div className="flex min-h-0 flex-1">
          <ModeBar />
          <OrientationBar />
          <div className="flex pt-px">
            <SidePanel />
          </div>
          <div className="ml-[3px] flex-1 overflow-hidden border-l border-t border-[#8a9496] bg-[#dfdfd0]">
            <Schematic />
          </div>
        </div>
        <div className="h-px shrink-0 bg-[#777d7d]" />
        <StatusBar />
        <Taskbar />
      </div>
    </div>
  );
}
